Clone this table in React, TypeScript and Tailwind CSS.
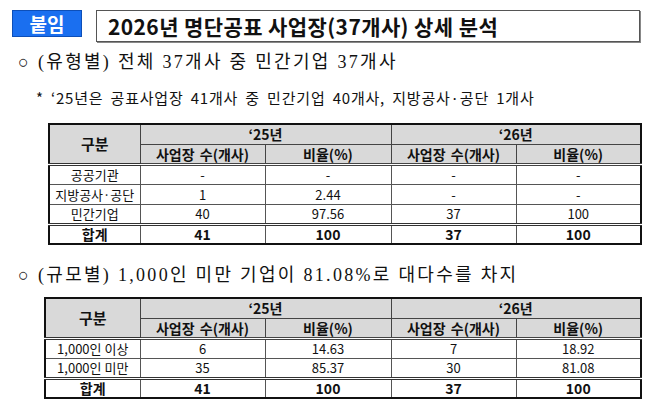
import React from 'react';

const SANS = '"Noto Sans CJK KR", "Noto Sans", sans-serif';
const SERIF = '"Liberation Serif", "Noto Sans CJK KR", serif';

type Row = { label: string; v: string[]; total?: boolean };

const TYPE_ROWS: Row[] = [
    { label: '공공기관', v: ['-', '-', '-', '-'] },
    { label: '지방공사·공단', v: ['1', '2.44', '-', '-'] },
    { label: '민간기업', v: ['40', '97.56', '37', '100'] },
    { label: '합계', v: ['41', '100', '37', '100'], total: true },
];

const SIZE_ROWS: Row[] = [
    { label: '1,000인 이상', v: ['6', '14.63', '7', '18.92'] },
    { label: '1,000인 미만', v: ['35', '85.37', '30', '81.08'] },
    { label: '합계', v: ['41', '100', '37', '100'], total: true },
];

const StatTable: React.FC<{ rows: Row[]; firstCol: number; className?: string }> = ({ rows, firstCol, className }) => {
    const th = 'bg-[#d9d9d9] border border-[#444] font-bold text-[14px] leading-none text-center p-0';
    return (
        <table className={`border-collapse border-2 border-[#111] table-fixed ${className ?? ''}`} style={{ fontFamily: SANS }}>
            <colgroup>
                <col style={{ width: firstCol }} />
                <col className="w-[125px]" />
                <col className="w-[126px]" />
                <col className="w-[125px]" />
                <col className="w-[125px]" />
            </colgroup>
            <thead>
                <tr className="h-[20px]">
                    <th rowSpan={2} className={`${th} text-[15px] border-b-[3px] border-b-[#333] border-double`}>구분</th>
                    <th colSpan={2} className={th}>‘25년</th>
                    <th colSpan={2} className={th}>‘26년</th>
                </tr>
                <tr className="h-[20px]">
                    <th className={`${th} border-b-[3px] border-double [word-spacing:2px]`}>사업장 수(개사)</th>
                    <th className={`${th} border-b-[3px] border-double`}>비율(%)</th>
                    <th className={`${th} border-b-[3px] border-double [word-spacing:2px]`}>사업장 수(개사)</th>
                    <th className={`${th} border-b-[3px] border-double`}>비율(%)</th>
                </tr>
            </thead>
            <tbody>
                {rows.map(r => (
                    <tr key={r.label} className={`h-[20px] ${r.total ? 'border-t-[3px] border-double border-[#333]' : ''}`}>
                        <td className={`border border-[#555] text-center leading-none p-0 text-[#111] ${r.total ? 'font-bold text-[14px]' : 'text-[13px]'}`}>
                            {r.label}
                        </td>
                        {r.v.map((val, i) => (
                            <td key={i} className={`border border-[#555] text-center leading-none p-0 text-[#111] ${r.total ? 'font-bold text-[14px]' : 'text-[13px]'}`}>
                                {val}
                            </td>
                        ))}
                    </tr>
                ))}
            </tbody>
        </table>
    );
};

export default function App() {
    return (
        <div className="w-[658px] h-[405px] bg-white overflow-hidden text-[#111] pt-[10px]">
            <div className="flex items-start ml-[12px] gap-[14px]">
                <div
                    className="w-[70px] h-[27px] bg-[#1a6ff0] border border-[#0d4fb8] flex items-center justify-center text-white font-bold text-[19px] leading-none"
                    style={{ fontFamily: SANS }}
                >
                    붙임
                </div>
                <div
                    className="w-[544px] h-[32px] border border-[#555] shadow-[1px_1px_0_#888] flex items-center pl-[11px] font-bold text-[21px] tracking-[0.4px] leading-none"
                    style={{ fontFamily: SANS }}
                >
                    2026년 명단공표 사업장(37개사) 상세 분석
                </div>
            </div>

            <p className="mt-[8px] ml-[18px] h-[24px] text-[18px] leading-[24px] tracking-[2.3px] whitespace-nowrap" style={{ fontFamily: SERIF }}>
                ○ (유형별) 전체 37개사 중 민간기업 37개사
            </p>
            <p className="mt-[14px] ml-[36px] h-[20px] text-[15px] leading-[20px] tracking-[0.8px] [word-spacing:3px] whitespace-nowrap" style={{ fontFamily: SANS }}>
                * ‘25년은 공표사업장 41개사 중 민간기업 40개사, 지방공사·공단 1개사
            </p>

            <StatTable rows={TYPE_ROWS} firstCol={91} className="mt-[15px] ml-[48px]" />

            <p className="mt-[18px] ml-[18px] h-[24px] text-[18px] leading-[24px] tracking-[2.3px] whitespace-nowrap" style={{ fontFamily: SERIF }}>
                ○ (규모별) 1,000인 미만 기업이 81.08%로 대다수를 차지
            </p>

            <StatTable rows={SIZE_ROWS} firstCol={95} className="mt-[10px] ml-[44px]" />
        </div>
    );
}
